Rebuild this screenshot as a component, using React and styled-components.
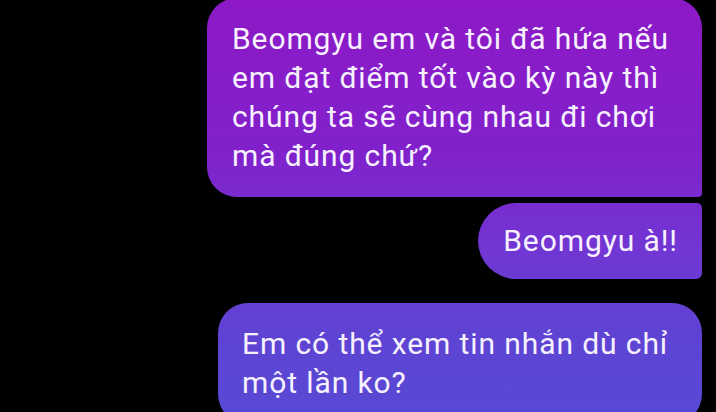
import React from "react";
import styled, { createGlobalStyle } from "styled-components";

const Global = createGlobalStyle`
  html, body { margin: 0; padding: 0; background: #000; }
  body { width: 716px; height: 412px; overflow: hidden; }
`;

const Thread = styled.div`
  display: flex;
  flex-direction: column;
  align-items: flex-end;
  padding-right: 14px;
  font-family: Roboto, "Noto Sans", sans-serif;
`;

const Bubble = styled.div`
  box-sizing: border-box;
  width: ${(p) => (p.$w ? `${p.$w}px` : "fit-content")};
  margin-top: ${(p) => p.$mt || 0}px;
  padding: ${(p) => p.$pad};
  border-radius: ${(p) => p.$radius};
  background: linear-gradient(180deg, #8d19c6 0px, #8121cb 150px, #7136d3 250px, #5f43d3 330px, #5849d4 412px);
  background-attachment: fixed;
  color: #f7f1ff;
  font-size: 30px;
  letter-spacing: 0.9px;
  line-height: 39px;
  white-space: nowrap;
`;

export default function App() {
  return (
    <>
      <Global />
      <Thread>
        <Bubble $w={495} $mt={-2} $pad="21px 25px 22px" $radius="30px 30px 4px 30px">
          Beomgyu em và tôi đã hứa nếu
          <br />
          em đạt điểm tốt vào kỳ này thì
          <br />
          chúng ta sẽ cùng nhau đi chơi
          <br />
          mà đúng chứ?
        </Bubble>
        <Bubble $mt={6} $pad="18px 24px 19px 25px" $radius="38px 5px 6px 38px">
          Beomgyu à!!
        </Bubble>
        <Bubble $w={484} $mt={24} $pad="21px 16px 22px 24px" $radius="30px 30px 30px 30px">
          Em có thể xem tin nhắn dù chỉ
          <br />
          một lần ko?
        </Bubble>
      </Thread>
    </>
  );
}
